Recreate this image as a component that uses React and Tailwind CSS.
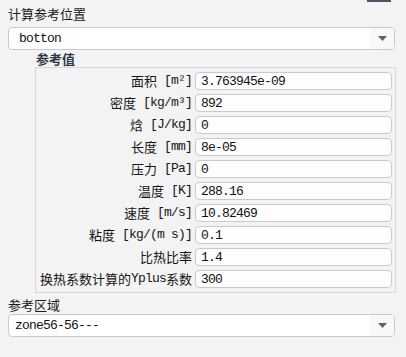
import React from "react";

const CN = { fontFamily: '"Noto Sans CJK SC", "Noto Sans", sans-serif' };
const MONO = { fontFamily: '"Liberation Mono", "Noto Sans CJK SC", monospace' };

const fields = [
  { cn: "面积", unit: " [m²]", value: "3.763945e-09" },
  { cn: "密度", unit: " [kg/m³]", value: "892" },
  { cn: "焓", unit: " [J/kg]", value: "0" },
  { cn: "长度", unit: " [mm]", value: "8e-05" },
  { cn: "压力", unit: " [Pa]", value: "0" },
  { cn: "温度", unit: " [K]", value: "288.16" },
  { cn: "速度", unit: " [m/s]", value: "10.82469" },
  { cn: "粘度", unit: " [kg/(m s)]", value: "0.1" },
  { cn: "比热比率", unit: "", value: "1.4" },
  { cn: "换热系数计算的", unit: "Yplus", tail: "系数", value: "300" },
];

function Arrow() {
  return (
    <svg width="9" height="5" viewBox="0 0 9 5">
      <polygon points="0,0 9,0 4.5,5" fill="#596170" />
    </svg>
  );
}

function Select({ value, pad }) {
  return (
    <div className="flex h-[23px] w-[387px] items-stretch overflow-hidden rounded-[4px] border border-[#c6cbd3] bg-white">
      <div
        className={`flex flex-1 items-center text-[13px] tracking-[-0.8px] text-[#111] ${pad}`}
        style={MONO}
      >
        {value}
      </div>
      <div className="flex w-[24px] items-center justify-center bg-[#f8f8f8] pb-[1px]">
        <Arrow />
      </div>
    </div>
  );
}

function Field({ f }) {
  return (
    <>
      <div className="flex h-[18px] items-center justify-end whitespace-pre text-[#161616]">
        <span className="text-[13px] leading-[18px]" style={CN}>
          {f.cn}
        </span>
        {f.unit && (
          <span className="text-[13px] leading-[18px] tracking-[-0.8px]" style={MONO}>
            {f.unit}
          </span>
        )}
        {f.tail && (
          <span className="text-[13px] leading-[18px]" style={CN}>
            {f.tail}
          </span>
        )}
      </div>
      <div
        className="flex h-[18px] items-center rounded-[4px] border border-[#c6cbd3] bg-[#fdfdfd] pl-[5px] pt-[1px] text-[13px] tracking-[-0.8px] text-[#111]"
        style={MONO}
      >
        {f.value}
      </div>
    </>
  );
}

export default function App() {
  return (
    <div className="relative h-[357px] w-[406px] overflow-hidden bg-[#f3f3f3] pl-[8px]">
      {/* leftover bar at top edge */}
      <div className="absolute left-[367px] top-0 h-[2px] w-[24px] bg-[#4b5563]" />

      <div className="pt-[6px] text-[13px] leading-[16px] text-[#1a1a1a]" style={CN}>
        计算参考位置
      </div>
      <div className="mt-[5px]">
        <Select value="botton" pad="pl-[10px]" />
      </div>

      <div
        className="ml-[28px] h-[17px] text-[13px] font-bold leading-[17px] text-[#2c3643]"
        style={CN}
      >
        参考值
      </div>
      <div className="ml-[27px] w-[361px] border border-[#d3d7dd] px-[4px] py-[4px]">
        <div className="grid grid-cols-[1fr_197px] gap-x-[3px] gap-y-[4px]">
          {fields.map((f) => (
            <Field key={f.cn + f.unit} f={f} />
          ))}
        </div>
      </div>

      <div className="mt-[4px] text-[13px] leading-[16px] text-[#1a1a1a]" style={CN}>
        参考区域
      </div>
      <div className="mt-[1px]">
        <Select value="zone56-56---" pad="pl-[6px]" />
      </div>
    </div>
  );
}
